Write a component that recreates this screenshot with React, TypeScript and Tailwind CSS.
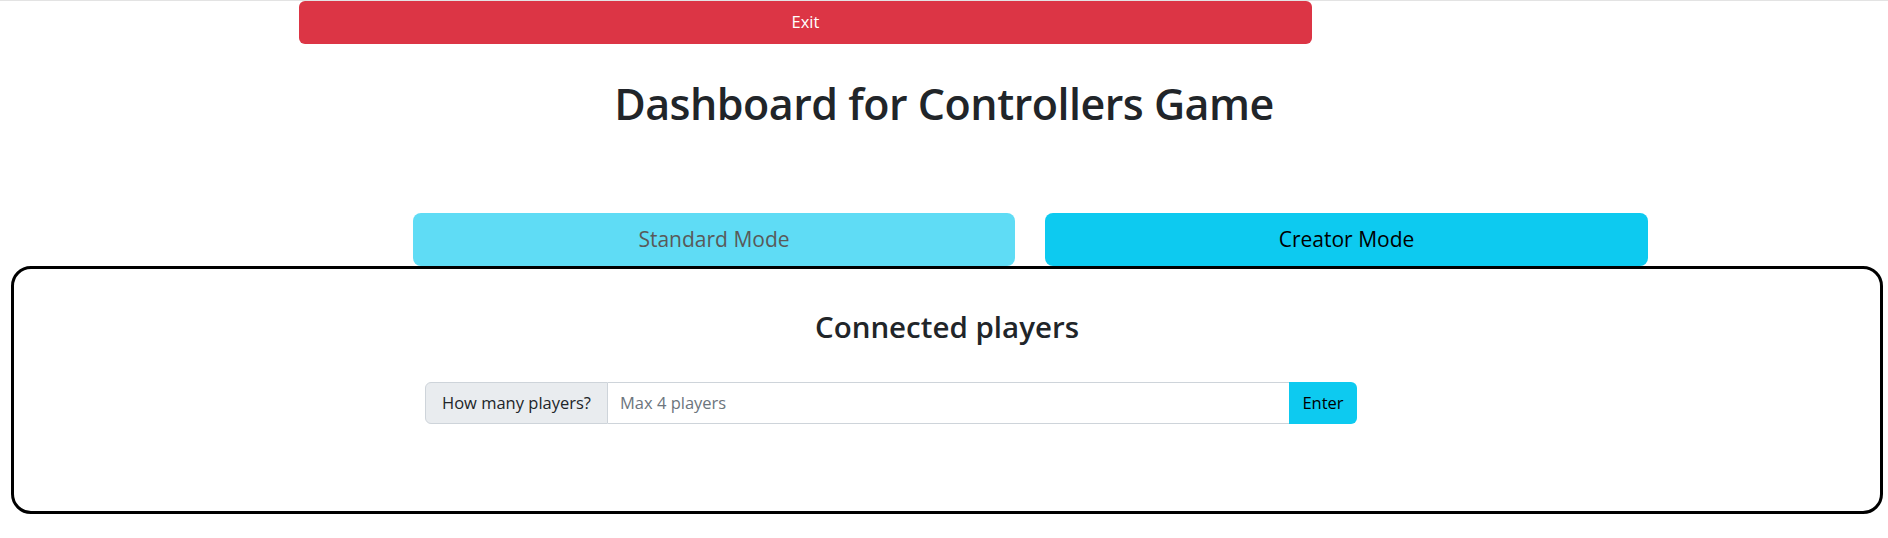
export default function App() {
  return (
    <div className="min-h-screen bg-white border-t border-[#e3e3e3] font-['Open_Sans',sans-serif] text-[#212529]">
      <button
        type="button"
        className="ml-[299px] flex h-[43px] w-[1013px] items-center justify-center rounded-[6px] bg-[#dc3545] text-[16.5px] text-white"
      >
        Exit
      </button>

      <h1 className="mt-[31px] text-center text-[43px] leading-[58px] font-semibold tracking-[-0.5px]">
        Dashboard for Controllers Game
      </h1>

      <div className="mt-[80px] ml-[413px] flex gap-[30px]">
        <button
          type="button"
          disabled
          className="flex h-[53px] w-[602px] items-center justify-center rounded-[8px] bg-[#5fdcf5] text-[21px] text-[#595959]"
        >
          Standard Mode
        </button>
        <button
          type="button"
          className="flex h-[53px] w-[603px] items-center justify-center rounded-[8px] bg-[#0dcaf0] text-[21px] text-black"
        >
          Creator Mode
        </button>
      </div>

      <section className="ml-[11px] h-[248px] w-[1872px] rounded-[20px] border-[3px] border-black">
        <h2 className="pt-[39px] text-center text-[29.5px] leading-[38px] font-semibold">
          Connected players
        </h2>
        <div className="mt-[36px] ml-[411px] flex h-[42px] w-[932px] text-[16.5px]">
          <span className="flex w-[183px] items-center justify-center rounded-l-[6px] border border-[#ced4da] bg-[#e9ecef]">
            How many players?
          </span>
          <input
            type="text"
            placeholder="Max 4 players"
            className="min-w-0 flex-1 border-y border-[#ced4da] px-[12px] text-[16.5px] outline-none placeholder:text-[#6c757d]"
          />
          <button
            type="button"
            className="w-[68px] rounded-r-[6px] bg-[#0dcaf0] text-black"
          >
            Enter
          </button>
        </div>
      </section>
    </div>
  )
}
